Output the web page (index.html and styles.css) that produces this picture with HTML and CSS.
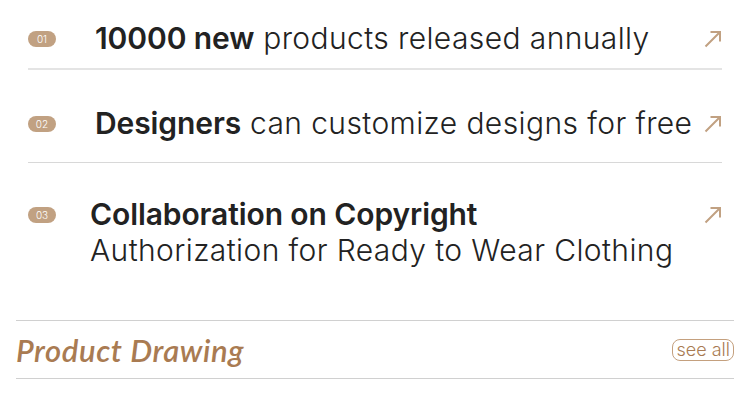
FILE: index.html
```html
<!DOCTYPE html>
<html lang="en">
<head>
	<meta charset="UTF-8">
	<title>Features</title>
	<link rel="stylesheet" href="styles.css">
</head>
<body>
<ul class="features">
    <li class="feature feature-first">
        <span class="num">01</span>
        <p class="feature-text"><b>10000 new</b> products released annually</p>
        <svg class="arrow" viewBox="0 0 18 18"><path d="M1.5 16.5L16 2M6.5 2H16V11.5"/></svg>
    </li>
    <li class="feature">
        <span class="num">02</span>
        <p class="feature-text"><b>Designers</b> can customize designs for free</p>
        <svg class="arrow" viewBox="0 0 18 18"><path d="M1.5 16.5L16 2M6.5 2H16V11.5"/></svg>
    </li>
    <li class="feature feature-last">
        <span class="num">03</span>
        <p class="feature-text"><b>Collaboration on Copyright</b><br>Authorization for Ready to Wear Clothing</p>
        <svg class="arrow" viewBox="0 0 18 18"><path d="M1.5 16.5L16 2M6.5 2H16V11.5"/></svg>
    </li>
</ul>
<!--/features-->
<div class="drawing">
    <h2 class="drawing-title">Product Drawing</h2>
    <a class="see-all" href="#">see all</a>
</div>
<!--/drawing-->
</body>
</html>
```

FILE: styles.css
```css
body,ul,li,p,h2 {margin:0;padding:0;}
body {
	background:#fff;
	color:#222;
	font-family:Inter, "Noto Sans", sans-serif;
}
.features {
	margin:0 28px;
	list-style:none;
}
.feature {
	display:flex;
	align-items:flex-start;
	padding:35px 0 21px;
	border-bottom:1px solid #d8d8d8;
}
.feature-first {
	padding-top:20px;
	padding-bottom:12px;
	border-bottom:2px solid #e4e4e4;
}
.feature-last {
	padding-top:33px;
	padding-bottom:52px;
	border-bottom:0;
}
.num {
	flex:none;
	width:28px;
	height:16px;
	margin-top:11px;
	border-radius:8px;
	background:#c1a182;
	color:#fff;
	font-size:10px;
	font-weight:300;
	line-height:16px;
	text-align:center;
}
.feature-text {
	margin-left:39px;
	font-size:30px;
	font-weight:300;
	line-height:36px;
	letter-spacing:0.4px;
}
.feature-last .feature-text {
	margin-left:34px;
}
.feature-text b {
	font-weight:600;
	letter-spacing:-0.1px;
}
.arrow {
	flex:none;
	width:18px;
	height:18px;
	margin:10px 0 0 auto;
	fill:none;
	stroke:#c1a182;
	stroke-width:2;
}
.drawing {
	display:flex;
	align-items:center;
	justify-content:space-between;
	height:57px;
	margin:0 16px;
	border-top:1px solid #d0d0d0;
	border-bottom:1px solid #d0d0d0;
}
.drawing-title {
	color:#a97b52;
	font-family:Lato, sans-serif;
	font-size:31px;
	font-style:italic;
	font-weight:600;
	letter-spacing:0.6px;
}
.see-all {
	height:20px;
	padding:0 3px;
	border:1px solid #c4a07e;
	border-radius:8px;
	color:#a97b52;
	font-size:18px;
	font-weight:300;
	line-height:19px;
	text-decoration:none;
}
```
